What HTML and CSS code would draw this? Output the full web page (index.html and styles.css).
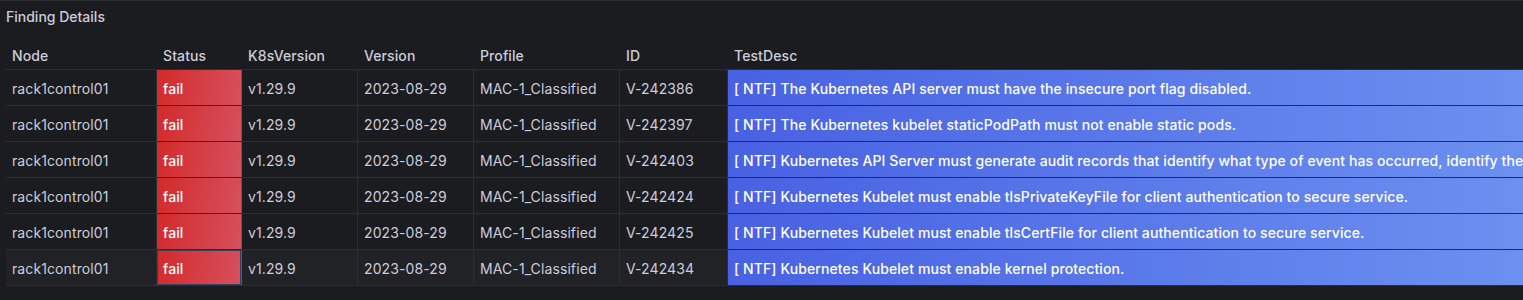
FILE: index.html
```html
<!DOCTYPE html>
<html>
<head>
<meta charset="utf-8">
<link rel="stylesheet" href="styles.css">
</head>
<body>
<div class="panel">
  <div class="panel-title">Finding Details</div>
  <div class="table">
    <div class="row head">
      <div class="cell">Node</div>
      <div class="cell">Status</div>
      <div class="cell">K8sVersion</div>
      <div class="cell">Version</div>
      <div class="cell">Profile</div>
      <div class="cell">ID</div>
      <div class="cell">TestDesc</div>
    </div>
    <div class="row">
      <div class="cell">rack1control01</div>
      <div class="cell fail">fail</div>
      <div class="cell">v1.29.9</div>
      <div class="cell">2023-08-29</div>
      <div class="cell">MAC-1_Classified</div>
      <div class="cell">V-242386</div>
      <div class="cell desc">[ NTF] The Kubernetes API server must have the insecure port flag disabled.</div>
    </div>
    <div class="row">
      <div class="cell">rack1control01</div>
      <div class="cell fail">fail</div>
      <div class="cell">v1.29.9</div>
      <div class="cell">2023-08-29</div>
      <div class="cell">MAC-1_Classified</div>
      <div class="cell">V-242397</div>
      <div class="cell desc">[ NTF] The Kubernetes kubelet staticPodPath must not enable static pods.</div>
    </div>
    <div class="row">
      <div class="cell">rack1control01</div>
      <div class="cell fail">fail</div>
      <div class="cell">v1.29.9</div>
      <div class="cell">2023-08-29</div>
      <div class="cell">MAC-1_Classified</div>
      <div class="cell">V-242403</div>
      <div class="cell desc">[ NTF] Kubernetes API Server must generate audit records that identify what type of event has occurred, identify the source of the event, contain the event results, identify any users, and identify any containers associated with the event.</div>
    </div>
    <div class="row">
      <div class="cell">rack1control01</div>
      <div class="cell fail">fail</div>
      <div class="cell">v1.29.9</div>
      <div class="cell">2023-08-29</div>
      <div class="cell">MAC-1_Classified</div>
      <div class="cell">V-242424</div>
      <div class="cell desc">[ NTF] Kubernetes Kubelet must enable tlsPrivateKeyFile for client authentication to secure service.</div>
    </div>
    <div class="row">
      <div class="cell">rack1control01</div>
      <div class="cell fail">fail</div>
      <div class="cell">v1.29.9</div>
      <div class="cell">2023-08-29</div>
      <div class="cell">MAC-1_Classified</div>
      <div class="cell">V-242425</div>
      <div class="cell desc">[ NTF] Kubernetes Kubelet must enable tlsCertFile for client authentication to secure service.</div>
    </div>
    <div class="row hover">
      <div class="cell">rack1control01</div>
      <div class="cell fail">fail</div>
      <div class="cell">v1.29.9</div>
      <div class="cell">2023-08-29</div>
      <div class="cell">MAC-1_Classified</div>
      <div class="cell">V-242434</div>
      <div class="cell desc">[ NTF] Kubernetes Kubelet must enable kernel protection.</div>
    </div>
  </div>
</div>
</body>
</html>
```
FILE: styles.css
```css
* { box-sizing: border-box; }
html, body {
  margin: 0;
  padding: 0;
  background: #1b1c20;
  overflow: hidden;
  width: 1523px;
  height: 300px;
}
.panel {
  border-top: 1px solid #2b2d32;
  font-family: Inter, "Noto Sans", sans-serif;
  font-size: 14px;
  letter-spacing: 0.1px;
  color: #ccccdc;
  height: 300px;
}
.panel-title {
  height: 35px;
  padding: 7px 0 0 6px;
  font-weight: 500;
  font-size: 14px;
  line-height: 18px;
  letter-spacing: 0;
}
.table {
  padding-left: 6px;
}
.row {
  display: grid;
  grid-template-columns: 151px 85px 116px 116px 146px 108px 1fr;
  height: 36px;
  border-bottom: 1px solid #2c2e33;
}
.row.head {
  height: 34px;
  font-weight: 500;
}
.cell {
  display: flex;
  align-items: center;
  padding: 2px 6px 0 6px;
  white-space: nowrap;
  overflow: hidden;
  border-right: 1px solid #2c2e33;
}
.row.head .cell {
  padding-top: 6px;
  border-right: 1px solid transparent;
}
.cell.fail {
  color: #ffffff;
  font-weight: 500;
  border-right-color: transparent;
  background: linear-gradient(100deg, #d32a2a, #d6505e);
}
.cell.desc {
  color: #ffffff;
  font-weight: 500;
  border-right: none;
  background: linear-gradient(90deg, #4861e2, #6c90f0);
}
.row.hover {
  background: #202226;
}
.row.hover .cell.fail {
  box-shadow: inset 0 0 0 1px #34405e;
}
```
